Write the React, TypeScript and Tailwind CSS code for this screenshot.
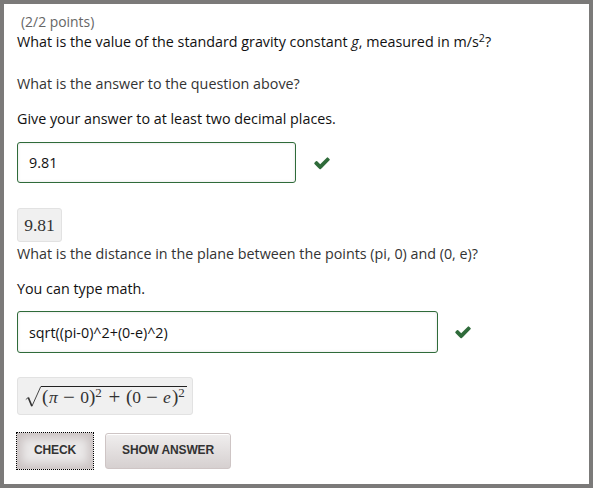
import type { ReactNode } from "react";

function Check() {
  return (
    <svg className="h-[18px] w-[18px] shrink-0 fill-[#2f6b3a]" viewBox="0 0 1792 1792" aria-hidden="true">
      <path d="M1671 566q0 40-28 68l-724 724-136 136q-28 28-68 28t-68-28l-136-136-362-362q-28-28-28-68t28-68l136-136q28-28 68-28t68 28l294 295 656-657q28-28 68-28t68 28l136 136q28 28 28 68z" />
    </svg>
  );
}

function Line({ className, children }: { className: string; children: ReactNode }) {
  return <p className={`h-5 whitespace-nowrap ${className}`}>{children}</p>;
}

function Paren({ children }: { children: ReactNode }) {
  return <span className="w-[6px] text-center text-[19px]">{children}</span>;
}

function Operator({ className, children }: { className: string; children: ReactNode }) {
  return <span className={`flex justify-center text-[21px] ${className}`}>{children}</span>;
}

function Squared() {
  return <span className="w-[7px] pb-[9px] text-center text-[13px]">2</span>;
}

export default function App() {
  return (
    <main className="h-[488px] w-[593px] overflow-hidden border-4 border-[#7b7a79] bg-white pl-[13px] pt-2 font-['Open_Sans','Noto_Sans',sans-serif] text-[14.32px] leading-5 text-[#222]">
      <Line className="ml-1 text-[13.9px] text-[#666]">(2/2 points)</Line>
      <Line className="text-[#111]">
        What is the value of the standard gravity constant <em>g</em>, measured in m/s
        <sup className="relative -top-[5px] align-baseline text-[10.7px] leading-none">2</sup>?
      </Line>

      <Line className="mt-[22px] text-[#333]">What is the answer to the question above?</Line>
      <Line className="mt-[15px] text-[#111]">Give your answer to at least two decimal places.</Line>
      <div className="mt-[13px] flex items-center gap-[17px]">
        <div className="flex h-[41px] w-[279px] items-center rounded-[3px] border border-[#2f6b3a] pl-[11px] text-[#111] shadow-[inset_0_0_3px_rgba(0,0,0,0.12)]">
          9.81
        </div>
        <Check />
      </div>
      <div className="mt-[25px] flex h-[34px] w-[45px] items-center justify-center rounded-[3px] border border-[#e2e2e2] bg-[#f0f0f0] font-['Liberation_Serif',serif] text-[17.5px] text-[#333]">
        9.81
      </div>

      <Line className="mt-[2px] text-[#333]">What is the distance in the plane between the points (pi, 0) and (0, e)?</Line>
      <Line className="mt-[15px] text-[#111]">You can type math.</Line>
      <div className="mt-3 flex items-center gap-[16px]">
        <div className="flex h-[42px] w-[421px] items-center rounded-[3px] border border-[#2f6b3a] pl-[11px] pt-px text-[#111] shadow-[inset_0_0_3px_rgba(0,0,0,0.12)]">
          sqrt((pi-0)^2+(0-e)^2)
        </div>
        <Check />
      </div>
      <div className="mt-6 flex h-[38px] w-[176px] items-start rounded-[3px] border border-[#e2e2e2] bg-[#f0f0f0] pl-[7px] pt-[8px] font-['Liberation_Serif',serif] text-[17.5px] text-[#333]">
        <svg className="h-[22px] w-[16px] shrink-0" viewBox="0 0 16 22" fill="none" stroke="#333" aria-hidden="true">
          <path d="M0.8 13.5L3.3 11.5" strokeWidth="0.8" />
          <path d="M3.3 11.5L6.8 20" strokeWidth="1.7" />
          <path d="M6.8 20.5L15.8 0.5" strokeWidth="0.9" />
        </svg>
        <div className="flex h-[21px] w-[146px] items-center border-t border-[#222] pl-px">
          <Paren>(</Paren>
          <i className="w-[11px] text-center">π</i>
          <Operator className="ml-1 w-[12px]">−</Operator>
          <span className="ml-[5px] w-[9px] text-center">0</span>
          <Paren>)</Paren>
          <Squared />
          <Operator className="ml-[6px] w-[13px]">+</Operator>
          <span className="ml-[5px] flex">
            <Paren>(</Paren>
          </span>
          <span className="w-[9px] text-center">0</span>
          <Operator className="ml-[5px] w-[12px]">−</Operator>
          <i className="ml-[5px] w-[8px] text-center">e</i>
          <span className="ml-px flex">
            <Paren>)</Paren>
          </span>
          <Squared />
        </div>
      </div>

      <div className="-ml-px mt-[17px] flex items-center gap-[11px] font-['Liberation_Sans',sans-serif] text-[12px] font-bold tracking-[-0.15px] text-[#333]">
        <button className="h-[38px] w-[78px] border border-dotted border-black bg-[#ebe9e9] pb-[3px] shadow-[inset_0_0_10px_5px_#cac2c2]">CHECK</button>
        <button className="h-9 w-[126px] rounded-[3px] border border-[#cec5c5] bg-linear-to-b from-[#f0eeee] to-[#d6d0d0] pb-[3px] shadow-[inset_0_1px_0_#fff]">SHOW ANSWER</button>
      </div>
    </main>
  );
}
